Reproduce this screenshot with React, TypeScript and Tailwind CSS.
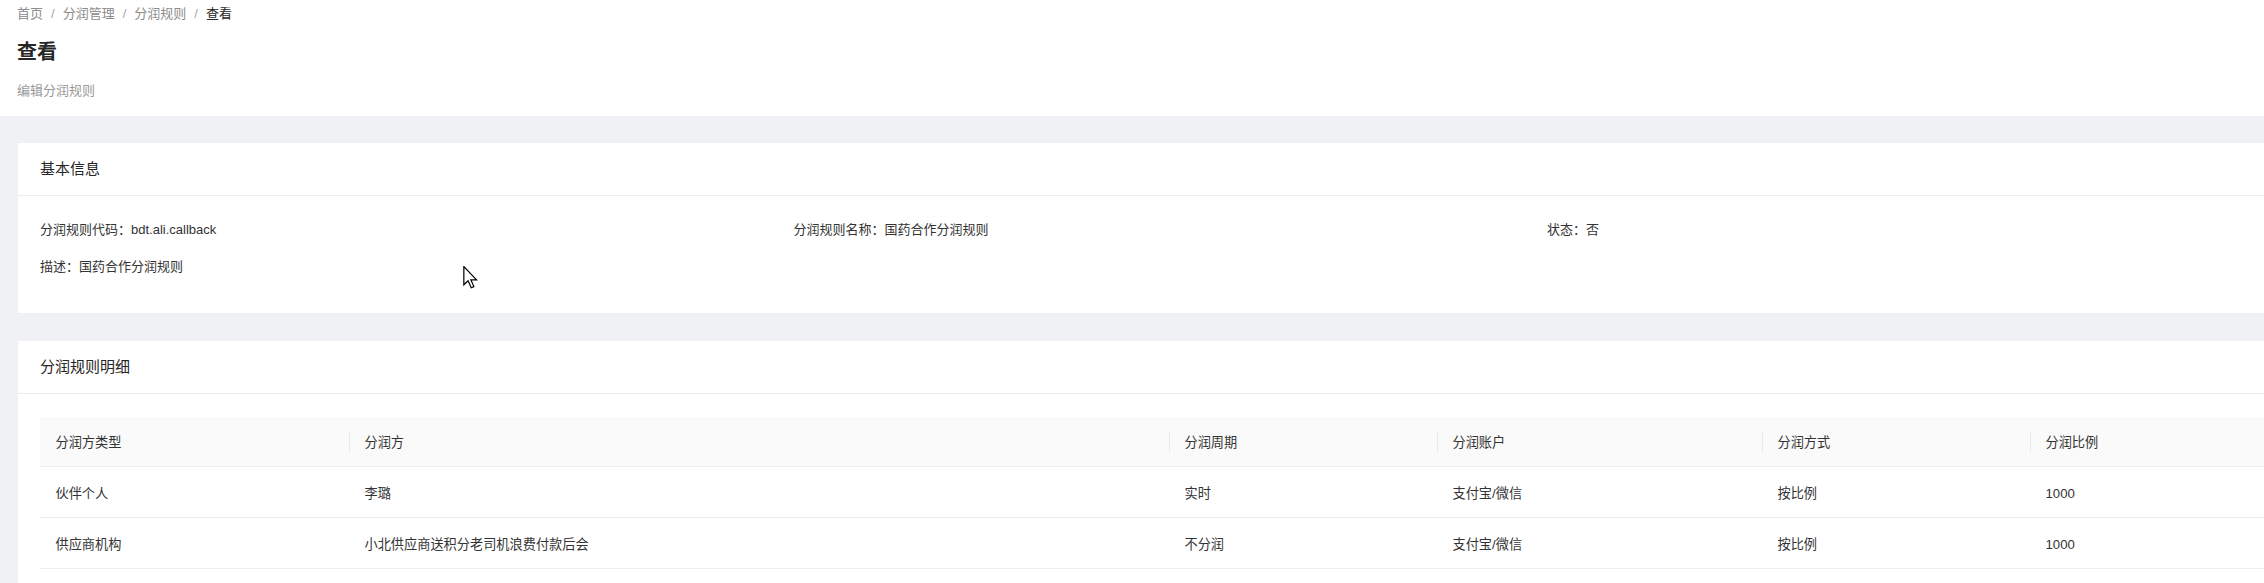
const font = { fontFamily: '"Liberation Sans", "Noto Sans CJK SC", sans-serif' };

const crumbs = ['首页', '分润管理', '分润规则'];

const info = [
  [
    { label: '分润规则代码', value: 'bdt.ali.callback' },
    { label: '分润规则名称', value: '国药合作分润规则' },
    { label: '状态', value: '否' },
  ],
  [{ label: '描述', value: '国药合作分润规则' }],
];

const columns = [
  { title: '分润方类型', w: 'w-[309px]' },
  { title: '分润方', w: 'w-[820px]' },
  { title: '分润周期', w: 'w-[268px]' },
  { title: '分润账户', w: 'w-[325px]' },
  { title: '分润方式', w: 'w-[268px]' },
  { title: '分润比例', w: 'flex-1' },
];

const rows = [
  ['伙伴个人', '李璐', '实时', '支付宝/微信', '按比例', '1000'],
  ['供应商机构', '小北供应商送积分老司机浪费付款后会', '不分润', '支付宝/微信', '按比例', '1000'],
];

function Card({ title, children }: { title: string; children: React.ReactNode }) {
  return (
    <div className="bg-white">
      <div className="h-[53px] px-[22px] flex items-center border-b border-[#ececec] text-[15px] text-[#262626]">
        {title}
      </div>
      {children}
    </div>
  );
}

export default function App() {
  return (
    <div className="relative w-full h-[583px] overflow-hidden bg-[#f0f1f5]" style={font}>
      <div className="w-[2341px]">
        {/* page header */}
        <div className="h-[116px] bg-white px-[17px]">
          <div className="pt-[3px] h-[25px] flex items-center text-[13px] leading-[22px]">
            {crumbs.map((c) => (
              <span key={c} className="flex items-center">
                <span className="text-[#8c8c8c]">{c}</span>
                <span className="mx-[8px] text-[#a6a6a6]">/</span>
              </span>
            ))}
            <span className="text-[#262626]">查看</span>
          </div>
          <div className="mt-[13px] text-[20px] leading-[28px] font-bold text-[#262626]">查看</div>
          <div className="mt-[15px] text-[13px] leading-[20px] text-[#999999]">编辑分润规则</div>
        </div>

        <div className="px-[18px] pt-[27px] flex flex-col gap-[28px]">
          <Card title="基本信息">
            <div className="px-[22px] pt-[23px] pb-[5px] text-[13px] text-[#333333]">
              {info.map((row, i) => (
                <div key={i} className="flex pb-[15px] leading-[22px]">
                  {row.map((item) => (
                    <div key={item.label} className="w-[753.5px]">
                      {item.label}：{item.value}
                    </div>
                  ))}
                </div>
              ))}
              <div className="h-[15px]" />
            </div>
          </Card>

          <Card title="分润规则明细">
            <div className="px-[22px] pt-[23px] pb-[40px] text-[13.2px] text-[#333333]">
              <div className="flex h-[50px] bg-[#fafafa] border-b border-[#ececec]">
                {columns.map((col, i) => (
                  <div key={col.title} className={`${col.w} relative flex items-center px-[15.5px] pt-[2px]`}>
                    {i > 0 && (
                      <span className="absolute left-0 top-1/2 -translate-y-1/2 h-[21px] w-px bg-[#ebebeb]" />
                    )}
                    {col.title}
                  </div>
                ))}
              </div>
              {rows.map((r, ri) => (
                <div key={ri} className="flex h-[51px] border-b border-[#ececec]">
                  {r.map((cell, ci) => (
                    <div key={ci} className={`${columns[ci].w} flex items-center px-[15.5px] pt-[3px]`}>
                      {cell}
                    </div>
                  ))}
                </div>
              ))}
            </div>
          </Card>
        </div>
      </div>

      {/* mouse pointer captured in the screenshot */}
      <svg
        className="absolute left-[463px] top-[266px]"
        width="15"
        height="23"
        viewBox="0 0 12 19"
      >
        <path
          d="M0.5 0.5 L0.5 15.5 L4 12.2 L6.6 18 L8.8 17 L6.3 11.4 L11 11.4 Z"
          fill="#ffffff"
          stroke="#000000"
          strokeWidth="1"
          strokeLinejoin="miter"
        />
      </svg>
    </div>
  );
}
